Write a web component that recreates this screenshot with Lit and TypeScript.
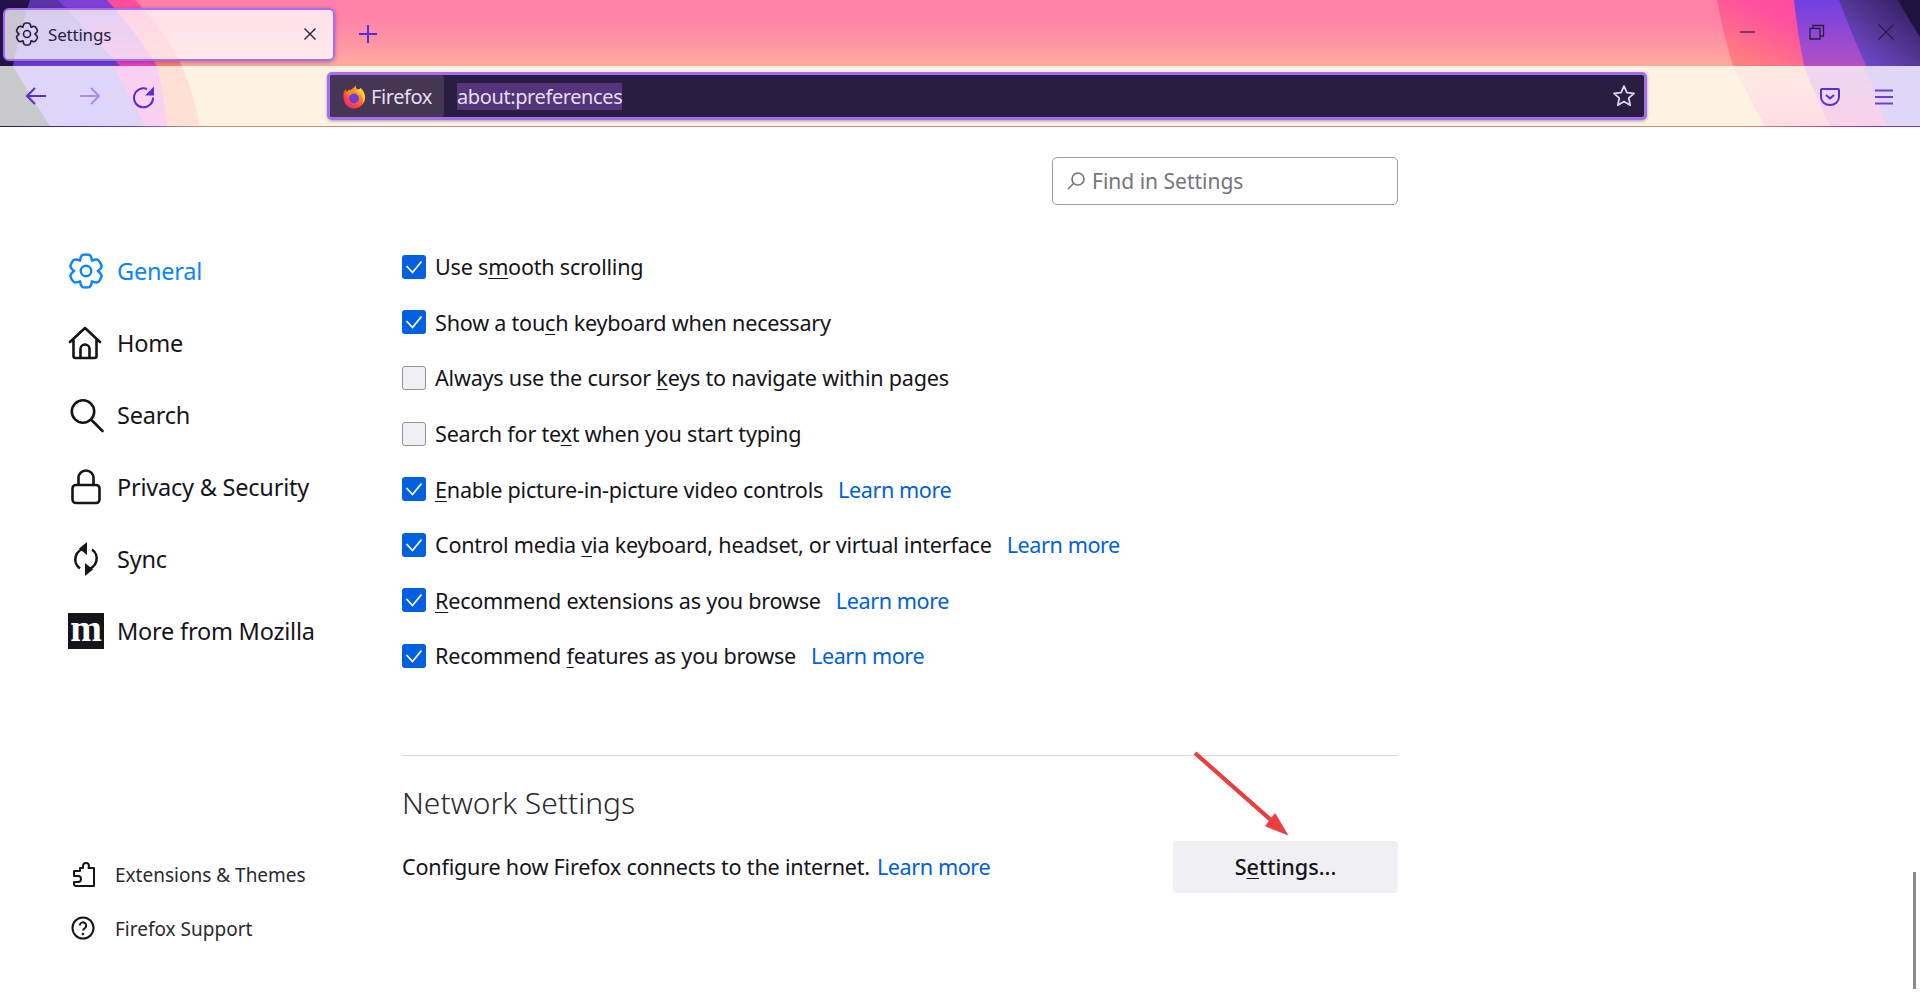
import { LitElement, html, css, svg } from "lit";
import { customElement } from "lit/decorators.js";

function gearPath(): string {
  const R = 11, r = 7.9, cx = 12, cy = 12;
  const pt = (deg: number, rad: number) => {
    const a = (deg * Math.PI) / 180;
    return `${(cx + rad * Math.cos(a)).toFixed(2)} ${(cy + rad * Math.sin(a)).toFixed(2)}`;
  };
  let d = `M${pt(-90 - 30, r)}`;
  for (let k = 0; k < 6; k++) {
    const t = -90 + 60 * k;
    d += ` Q${pt(t - 21, R * 0.95)} ${pt(t - 12, R)}`;
    d += ` Q${pt(t, R * 1.03)} ${pt(t + 12, R)}`;
    d += ` Q${pt(t + 21, R * 0.95)} ${pt(t + 30, r)}`;
  }
  return d + "Z";
}
const GP = gearPath();
const gear = (c: string, w: number) => svg`<path fill="none" stroke="${c}" stroke-width="${w}" stroke-linejoin="round" d="${GP}"/><circle cx="12" cy="12" r="3.5" fill="none" stroke="${c}" stroke-width="${w}"/>`;

const learn = html`<a class="link">Learn more</a>`;

const rows = [
  { on: true, t: html`Use s<u>m</u>ooth scrolling` },
  { on: true, t: html`Show a tou<u>c</u>h keyboard when necessary` },
  { on: false, t: html`Always use the cursor <u>k</u>eys to navigate within pages` },
  { on: false, t: html`Search for te<u>x</u>t when you start typing` },
  { on: true, t: html`<u>E</u>nable picture-in-picture video controls`, l: true },
  { on: true, t: html`Control media <u>v</u>ia keyboard, headset, or virtual interface`, l: true },
  { on: true, t: html`<u>R</u>ecommend extensions as you browse`, l: true },
  { on: true, t: html`Recommend <u>f</u>eatures as you browse`, l: true },
];

const navIcons = {
  general: svg`<svg class="ni" viewBox="0 0 24 24">${gear("#0a84ff", 1.6)}</svg>`,
  home: svg`<svg class="ni" viewBox="0 0 36 36"><path fill="none" stroke="#15141a" stroke-width="2.6" stroke-linejoin="round" stroke-linecap="round" d="M2 17 17 3l15 14M5.500 14v17a2 2 0 0 0 2 2h19a2 2 0 0 0 2-2V14M12.500 33V24a4.500 4.500 0 0 1 9 0v9"/></svg>`,
  search: svg`<svg class="ni" viewBox="0 0 36 36"><circle cx="15" cy="14.500" r="11.200" fill="none" stroke="#15141a" stroke-width="2.600"/><path d="m23.500 23 11 11" stroke="#15141a" stroke-width="2.600" stroke-linecap="round"/></svg>`,
  lock: svg`<svg class="ni" viewBox="0 0 36 36"><rect x="4.500" y="16" width="27" height="18" rx="3.500" fill="none" stroke="#15141a" stroke-width="2.600"/><path d="M10.500 16V9a7.500 7.500 0 0 1 15 0v7" fill="none" stroke="#15141a" stroke-width="2.600"/></svg>`,
  sync: svg`<svg class="ni" viewBox="0 0 36 36"><path fill="none" stroke="#15141a" stroke-width="2.600" d="M18 7.500A11 11 0 0 0 12 27.500M18 28.500A11 11 0 0 0 24 8.500"/><path fill="#15141a" d="M19 1v13l-8-6.500zM17 35V22l8 6.500z"/></svg>`,
};

@customElement("app-root")
export class AppRoot extends LitElement {
  static styles = css`
    :host {
      display: block;
      width: 1920px;
      height: 1008px;
      overflow: hidden;
      position: relative;
      background: #fff;
      color: #15141a;
      font-family: "Noto Sans", "Open Sans", sans-serif;
    }
    * { box-sizing: border-box; }
    svg { display: block; flex: none; }
    u { text-underline-offset: 3px; text-decoration-thickness: 1px; }
    .chrome { position: relative; height: 127px; }
    .decor { position: absolute; left: 0; top: 0; }
    .titlebar { position: relative; height: 66px; display: flex; align-items: center; padding: 2px 0 0 3px; }
    .tab {
      width: 332px; height: 53px; display: flex; align-items: center;
      padding: 0 16px 0 10px; gap: 9px;
      background: rgba(255,255,255,.76); border: 2px solid #a56df0; border-radius: 6px;
      box-shadow: 0 1px 4px rgba(40,20,90,.35);
      font-size: 17px; letter-spacing: -.2px; color: #2b1d42;
    }
    .tab span { flex: 1; }
    .plus { margin-left: 24px; }
    .winctl { margin-left: auto; display: flex; align-items: center; gap: 53px; padding-right: 26px; margin-top: -4px; }
    .toolbar { position: relative; height: 60px; display: flex; align-items: center; padding: 0 27px 0 25px; }
    .navbtns { display: flex; gap: 32px; width: 302px; padding-top: 2px; }
    .url {
      width: 1320px; height: 48px; flex: none; display: flex; align-items: center;
      background: #2b1d42; border: 3px solid #a56df0; border-radius: 5px;
      box-shadow: 0 1px 3px rgba(40,20,90,.4);
      font-size: 20px; letter-spacing: -.4px; color: #e6dff0; padding-right: 8px;
    }
    .identity {
      height: 100%; width: 114px; display: flex; align-items: center; gap: 5px;
      padding-left: 12px; padding-top: 1px; background: #453656; border-radius: 3px; flex: none;
    }
    .address { margin-left: 13px; margin-top: 1px; background: #54347a; line-height: 27px; height: 27px; }
    .star { margin-left: auto; }
    .tb-right { margin-left: auto; display: flex; gap: 35px; align-items: center; padding-top: 2px; }
    .line {
      height: 1px; background: linear-gradient(90deg,#2b1d42 0,#6a3fd0 7%,#c58f78 10%,#c58f78 91%,#b83a90 96%,#6a3fd0 98%);
      position: absolute; left: 0; right: 0; top: 126px;
    }
    .page { display: flex; height: 881px; }
    .side { width: 402px; flex: none; display: flex; flex-direction: column; padding: 108px 0 52px 68px; }
    .nav { display: flex; align-items: center; gap: 13px; height: 72px; font-size: 23.5px; letter-spacing: -.22px; }
    .nav.sel { color: #0a84ff; }
    .ni { width: 36px; height: 36px; }
    .moz { width: 36px; height: 36px; background: #15141a; color: #fff; display: flex; align-items: center; justify-content: center; font: bold 38px/36px "Liberation Serif", serif; letter-spacing: 0; padding-bottom: 7px; flex: none; }
    .foot { margin-top: auto; }
    .fitem { display: flex; align-items: center; height: 54px; gap: 18px; font-size: 19px; padding-left: 3px; color: #2a2930; }
    .fitem svg { width: 26px; height: 26px; }
    .main { width: 996px; flex: none; display: flex; flex-direction: column; padding-top: 30px; }
    .find {
      align-self: flex-end; width: 346px; height: 48px; display: flex; align-items: center; gap: 6px;
      border: 1px solid #9e9ea5; border-radius: 5px; padding-left: 13px; font-size: 21px; color: #74747c;
    }
    .list { margin-top: 34px; }
    .row { height: 55.6px; display: flex; align-items: center; font-size: 21.6px; letter-spacing: -.23px; white-space: pre; }
    .cb { width: 24px; height: 24px; border-radius: 3px; margin-right: 9px; flex: none; display: flex; align-items: center; justify-content: center; }
    .cb.on { background: #0060df; }
    .cb.off { background: #f0f0f4; border: 1px solid #8f8f9d; }
    .link { color: #0060df; margin-left: 15px; letter-spacing: -.42px; }
    .hr { height: 1px; background: #d7d7db; margin-top: 71px; }
    h2 { font-weight: 300; font-size: 30px; color: #2a2930; margin: 0; height: 78px; display: flex; align-items: center; padding-top: 15px; }
    .net { display: flex; align-items: center; justify-content: space-between; height: 52px; margin-top: 7px; font-size: 21.6px; letter-spacing: -.21px; }
    .net .link { margin-left: 7px; }
    .btn { width: 225px; height: 52px; border-radius: 4px; background: #f0f0f4; display: flex; align-items: center; justify-content: center; font-weight: 500; letter-spacing: 0; }
    .arrow { position: absolute; left: 1180px; top: 739px; filter: drop-shadow(1px 1px 0 rgba(0,0,0,.3)); }
    .scroll { position: absolute; left: 1913px; top: 872px; width: 3px; height: 117px; background: #8a8a8a; }
  `;

  render() {
    return html`
      <div class="chrome">
        <svg class="decor" width="1920" height="126" viewBox="0 0 1920 126">
          <defs>
            <linearGradient id="g" x1="0" y1="0" x2="0" y2="1"><stop offset="0" stop-color="#ff7fa9"/><stop offset=".35" stop-color="#ff85a8"/><stop offset="1" stop-color="#ffaa9f"/></linearGradient>
            <linearGradient id="p" x1="0" y1="0" x2="0" y2="1"><stop offset="0" stop-color="#7040e2"/><stop offset="1" stop-color="#b450c4"/></linearGradient>
            <linearGradient id="d" x1="0" y1="1" x2="1" y2="0"><stop offset="0" stop-color="#7c50ec"/><stop offset=".45" stop-color="#5a3aa0"/><stop offset="1" stop-color="#2c1a55"/></linearGradient>
            <linearGradient id="hp" x1="0" y1="1" x2="1" y2="0.3"><stop offset="0" stop-color="#ff8a78"/><stop offset=".55" stop-color="#ff4f9e"/><stop offset="1" stop-color="#ff4a9e"/></linearGradient>
            <linearGradient id="lb" x1="0" y1="0" x2="0" y2="1"><stop offset="0" stop-color="#7a40d8"/><stop offset="1" stop-color="#ee40bc"/></linearGradient>
            <linearGradient id="lc" x1="0" y1="0" x2="0" y2="1"><stop offset="0" stop-color="#ff4aa0"/><stop offset="1" stop-color="#ff8070"/></linearGradient>
            <linearGradient id="la" x1="0" y1="0" x2="0" y2="1"><stop offset="0" stop-color="#5a32a8"/><stop offset="1" stop-color="#6a40d4"/></linearGradient>
            <linearGradient id="tb1" x1="0" y1="0" x2="0" y2="1"><stop offset="0" stop-color="#eed7f0"/><stop offset="1" stop-color="#f9d1ea"/></linearGradient>
            <linearGradient id="tb2" x1="0" y1="0" x2="0" y2="1"><stop offset="0" stop-color="#ffeae2"/><stop offset="1" stop-color="#ffdde4"/></linearGradient>
          </defs>
          <rect width="1920" height="66" fill="url(#g)"/>
          <path d="M0 0H135Q165 30 182 66H0Z" fill="url(#lc)"/>
          <path d="M0 0H107Q135 30 157 66H0Z" fill="url(#lb)"/>
          <path d="M0 0H58Q92 35 120 66H0Z" fill="url(#la)"/>
          <path d="M0 0H30Q20 30 13 66H0Z" fill="#24124a"/>
          <path d="M1717 0H1920V66H1733Q1722 30 1717 0Z" fill="url(#hp)"/>
          <path d="M1794 0H1920V66H1804Q1797 30 1794 0Z" fill="url(#p)"/>
          <path d="M1839 0H1920V66H1866Q1850 30 1839 0Z" fill="url(#d)"/>
          <path d="M1898 0H1920V37Q1908 18 1898 0Z" fill="#1f1240"/>
          <rect y="66" width="1920" height="60" fill="#fef2e3"/>
          <path d="M0 66H182Q194 95 200 126H0Z" fill="#fee1d4"/>
          <path d="M0 66H157Q164 95 167 126H0Z" fill="#fad0f2"/>
          <path d="M0 66H113Q130 95 145 126H0Z" fill="#ded5f8"/>
          <path d="M0 66H13Q30 95 50 126H0Z" fill="#c9c9cc"/>
          <path d="M1733 66H1920V126H1765Q1748 95 1733 66Z" fill="url(#tb2)"/>
          <path d="M1804 66H1920V126H1830Q1815 95 1804 66Z" fill="url(#tb1)"/>
          <path d="M1865 66H1920V126H1887Q1875 95 1865 66Z" fill="#dfd6f8"/>
        </svg>
        <div class="titlebar">
          <div class="tab">
            <svg width="24" height="24" viewBox="0 0 24 24">${gear("#2b1d42", 1.6)}</svg>
            <span>Settings</span>
            <svg width="14" height="14" viewBox="0 0 14 14"><path d="M1.500 1.500l11 11M12.500 1.500l-11 11" stroke="#2b1d42" stroke-width="1.400"/></svg>
          </div>
          <svg class="plus" width="18" height="18" viewBox="0 0 18 18"><path d="M9 0v18M0 9h18" stroke="#5b2bd6" stroke-width="2"/></svg>
          <div class="winctl">
            <svg width="16" height="16" viewBox="0 0 16 16"><path d="M0 8h15" stroke="#2b1d42" stroke-width="1.200"/></svg>
            <svg width="16" height="16" viewBox="0 0 16 16"><path d="M1 4.500h10v10.500H1zM4 4.500V1.500h10.500V12H11" fill="none" stroke="#2b1d42" stroke-width="1.300"/></svg>
            <svg width="16" height="16" viewBox="0 0 16 16"><path d="M.500.500l15 15M15.500.500l-15 15" stroke="#2b1d42" stroke-width="1.200"/></svg>
          </div>
        </div>
        <div class="toolbar">
          <div class="navbtns">
            <svg width="22" height="22" viewBox="0 0 22 22"><path d="M21 11H2M10 3l-8 8 8 8" fill="none" stroke="#5b2bd6" stroke-width="2"/></svg>
            <svg width="22" height="22" viewBox="0 0 22 22"><path d="M1 11H20M12 3l8 8-8 8" fill="none" stroke="#a98ce8" stroke-width="2"/></svg>
            <svg width="22" height="24" viewBox="0 0 22 24"><path d="M20 12.500A9.500 9.500 0 1 1 14 4" fill="none" stroke="#5b2bd6" stroke-width="2"/><path d="M21 1.500v9h-9z" fill="#5b2bd6"/></svg>
          </div>
          <div class="url">
            <div class="identity">
              <svg width="24" height="24" viewBox="0 0 24 24">
                <defs>
                  <radialGradient id="ff" cx=".75" cy=".2" r=".95"><stop offset="0" stop-color="#ffbd2e"/><stop offset=".45" stop-color="#ff7a1f"/><stop offset=".8" stop-color="#ff3d4a"/><stop offset="1" stop-color="#f5207a"/></radialGradient>
                </defs>
                <path d="M1.500 10C1 7.500 2.500 5 4 4c-.2 1.200 0 2 .6 2.500C6 5 8 4.300 9.500 4.500 11 3 12.500 2 14 .5c-.3 1.500 0 3 1.300 4.300 1.500-.3 2.500-.7 3.200-1.800C21.500 5.500 23 9 23 12.500 23 18.800 18 23.500 12 23.500S1 18.500 1.500 10z" fill="url(#ff)"/>
                <path d="M14 .5c-.3 1.500 0 3 1.300 4.300 1.500-.3 2.500-.7 3.200-1.800C21.500 5.500 23 9 23 12.500c0 2.500-1 4.800-2.500 6.500 1-3.500.5-7.500-2-10-1.500-1.500-5-3-4.500-8.500z" fill="#ffc93a"/>
                <circle cx="12" cy="13.500" r="5" fill="#6d3fd8"/>
                <path d="M3.500 8.500c1.500-2 4.500-3.500 7-3 1.500.3 2.700 1.200 3.300 2.500-1.500-.5-3.300 0-4 1.200-2.500.5-4.500.3-6.300-.7z" fill="#ff8a1f"/>
              </svg>
              <span>Firefox</span>
            </div>
            <span class="address">about:preferences</span>
            <svg class="star" width="24" height="24" viewBox="0 0 24 24"><path d="M12 2l2.900 6.600 7.100.8-5.300 4.800 1.500 7.100L12 17.600l-6.200 3.700 1.500-7.100L2 9.400l7.100-.8z" fill="none" stroke="#dcd5ee" stroke-width="1.800" stroke-linejoin="round"/></svg>
          </div>
          <div class="tb-right">
            <svg width="20" height="18" viewBox="0 0 20 18"><path d="M2 1h16a1 1 0 0 1 1 1v7a9 8 0 0 1-18 0V2a1 1 0 0 1 1-1z" fill="none" stroke="#5b2bd6" stroke-width="2"/><path d="M6 7l4 3.500L14 7" fill="none" stroke="#5b2bd6" stroke-width="2"/></svg>
            <svg width="18" height="16" viewBox="0 0 18 16"><path d="M0 1.500h18M0 8h18M0 14.500h18" stroke="#6d3fd8" stroke-width="2"/></svg>
          </div>
        </div>
        <div class="line"></div>
      </div>
      <div class="page">
        <aside class="side">
          <div class="nav sel">${navIcons.general}General</div>
          <div class="nav">${navIcons.home}Home</div>
          <div class="nav">${navIcons.search}Search</div>
          <div class="nav">${navIcons.lock}Privacy &amp; Security</div>
          <div class="nav">${navIcons.sync}Sync</div>
          <div class="nav"><div class="moz">m</div>More from Mozilla</div>
          <div class="foot">
            <div class="fitem">
              <svg viewBox="0 0 26 26"><path fill="none" stroke="#15141a" stroke-width="2" stroke-linejoin="round" d="M9 6h3V4a3 3 0 0 1 6 0l-.5 2H23v18H5a2 2 0 0 1-2-2v-2h4a2.500 2.500 0 0 0 0-6H3v-5h6z"/></svg>
              Extensions &amp; Themes
            </div>
            <div class="fitem">
              <svg viewBox="0 0 26 26"><circle cx="12" cy="12" r="10.500" fill="none" stroke="#15141a" stroke-width="2"/><path d="M8.800 9.500a3.200 3.200 0 1 1 4.800 2.800c-1 .6-1.600 1.200-1.600 2.200" fill="none" stroke="#15141a" stroke-width="2"/><circle cx="12" cy="18" r="1.300" fill="#15141a"/></svg>
              Firefox Support
            </div>
          </div>
        </aside>
        <main class="main">
          <div class="find">
            <svg width="20" height="20" viewBox="0 0 20 20"><circle cx="12" cy="8" r="6" fill="none" stroke="#74747c" stroke-width="1.600"/><path d="M7.500 12.500 2 18" stroke="#74747c" stroke-width="1.600"/></svg>
            Find in Settings
          </div>
          <div class="list">
            ${rows.map((r) => html`
              <div class="row">
                <div class="cb ${r.on ? "on" : "off"}">
                  ${r.on ? html`<svg width="18" height="14" viewBox="0 0 18 14"><path d="M1.500 6l6 6.500L16.500 1.500" fill="none" stroke="#fff" stroke-width="1.800"/></svg>` : ""}
                </div>
                <span>${r.t}</span>${r.l ? learn : ""}
              </div>`)}
          </div>
          <div class="hr"></div>
          <h2>Network Settings</h2>
          <div class="net">
            <span>Configure how Firefox connects to the internet.<a class="link">Learn more</a></span>
            <div class="btn"><span>S<u>e</u>ttings...</span></div>
          </div>
        </main>
      </div>
      <svg class="arrow" width="120" height="110" viewBox="0 0 120 110">
        <path d="M15 14 92 82" stroke="#ef3d3d" stroke-width="4"/>
        <path d="M108 96 85 87 95 74z" fill="#ef3d3d"/>
      </svg>
      <div class="scroll"></div>
    `;
  }
}
